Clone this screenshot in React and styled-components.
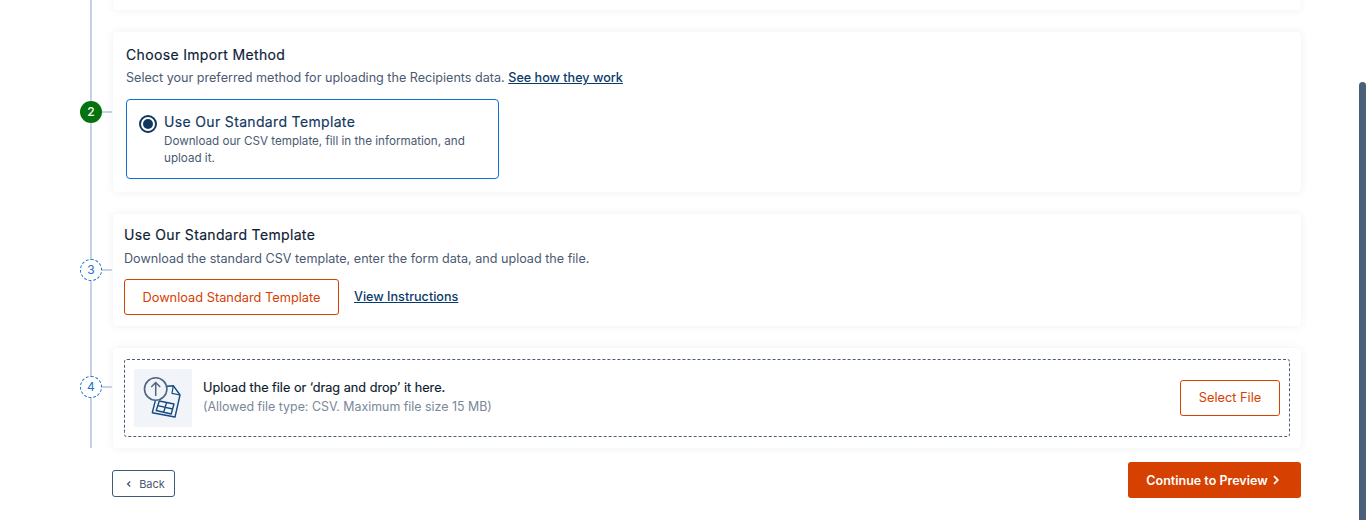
import React from "react";
import styled, { createGlobalStyle } from "styled-components";

const Global = createGlobalStyle`
  html, body { margin: 0; padding: 0; background: #fff; height: 520px; overflow: hidden; }
  body { font-family: Inter, "Liberation Sans", sans-serif; color: #12263f; }
  * { box-sizing: border-box; }
`;

const Page = styled.div`
  position: relative;
  width: 1366px;
  height: 520px;
  overflow: hidden;
  padding: 0 65px 0 80px;
`;

const Thumb = styled.div`
  position: absolute;
  left: 1359px;
  top: 82px;
  width: 7px;
  height: 460px;
  background: #4a5f7a;
  border-radius: 4px 4px 0 0;
`;

const Steps = styled.div`
  position: relative;
  display: flex;
  flex-direction: column;
  gap: 22px;
  &::before {
    content: "";
    position: absolute;
    left: 10px;
    top: 0;
    bottom: 0;
    width: 2px;
    background: #c5d2e6;
  }
`;

const Row = styled.div`
  display: flex;
  align-items: stretch;
`;

const Gutter = styled.div`
  position: relative;
  flex: 0 0 33px;
  display: flex;
  align-items: center;
  padding-bottom: ${(p) => p.$lift || 0}px;
`;

const Marker = styled.div`
  width: 22px;
  height: 22px;
  border-radius: 50%;
  display: flex;
  align-items: center;
  justify-content: center;
  font-size: 12px;
  line-height: 1;
  background: ${(p) => (p.$done ? "#04720f" : "#fff")};
  color: ${(p) => (p.$done ? "#fff" : "#1a6fd0")};
  border: ${(p) => (p.$done ? "none" : "1px dashed #1a76d2")};
  font-weight: ${(p) => (p.$done ? 500 : 400)};
  z-index: 1;
`;

const Connector = styled.div`
  width: 10px;
  height: 2px;
  background: #c5d2e6;
`;

const Card = styled.div`
  flex: 1;
  min-width: 0;
  background: #fff;
  border-radius: 4px;
  box-shadow: 0 0 8px rgba(40, 70, 130, 0.08);
  padding: ${(p) => p.$pad || "0"};
  height: ${(p) => p.$h}px;
`;

const Title = styled.div`
  font-size: 14px;
  font-weight: 400;
  line-height: 20px;
  letter-spacing: 0.34px;
  color: #0c2036;
  -webkit-text-stroke: 0.15px #0c2036;
`;

const Sub = styled.div`
  font-size: 12.6px;
  line-height: 18px;
  color: #4a5a72;
  margin-top: ${(p) => p.$mt || 4}px;
`;

const TextLink = styled.a`
  color: #0b3a6a;
  font-weight: 500;
  text-decoration: underline;
  font-size: 12.6px;
  margin-bottom: ${(p) => (p.$up ? 2 : 0)}px;
`;

const Option = styled.div`
  width: 373px;
  height: 80px;
  margin-top: 12px;
  border: 1px solid #0a73d2;
  border-radius: 4px;
  padding: 12px 12px 0 12px;
  display: flex;
  gap: 7px;
`;

const Radio = styled.div`
  flex: 0 0 18px;
  width: 18px;
  height: 18px;
  margin-top: 3px;
  border-radius: 50%;
  border: 2px solid #12375f;
  display: flex;
  align-items: center;
  justify-content: center;
  &::after {
    content: "";
    width: 10px;
    height: 10px;
    border-radius: 50%;
    background: #12375f;
  }
`;

const OptionTitle = styled.div`
  font-size: 14px;
  line-height: 20px;
  font-weight: 400;
  letter-spacing: 0.34px;
  color: #12375f;
  -webkit-text-stroke: 0.15px #12375f;
  margin-bottom: 1px;
`;

const OptionText = styled.div`
  font-size: 11.65px;
  line-height: 17px;
  color: #4a5a72;
`;

const Actions = styled.div`
  display: flex;
  align-items: center;
  gap: 15px;
  margin-top: 11px;
`;

const OutlineButton = styled.button`
  width: ${(p) => p.$w}px;
  height: 36px;
  background: #fff;
  border: 1px solid #d64000;
  border-radius: 3px;
  color: #d64000;
  font: 400 12.8px Inter, sans-serif;
  padding: 0 0 ${(p) => p.$lift || 0}px;
`;

const Drop = styled.div`
  height: 78px;
  border: 1px dashed #4a5f7a;
  border-radius: 3px;
  display: flex;
  align-items: center;
  padding: 0 9px;
`;

const IconBox = styled.div`
  width: 58px;
  height: 58px;
  background: #f1f5fa;
  flex: none;
`;

const DropText = styled.div`
  flex: 1;
  margin-left: 11px;
  padding-bottom: 2px;
`;

const DropTitle = styled.div`
  font-size: 12.7px;
  font-weight: 400;
  line-height: 18px;
  color: #0c1a2c;
  -webkit-text-stroke: 0.15px #0c1a2c;
`;

const DropNote = styled.div`
  font-size: 12.4px;
  line-height: 18px;
  color: #7a8798;
  margin-top: 1px;
`;

const Footer = styled.div`
  display: flex;
  justify-content: space-between;
  align-items: center;
  margin: 14px 0 0 32px;
`;

const BackButton = styled.button`
  width: 63px;
  height: 27px;
  margin-top: 6px;
  background: #fff;
  border: 1px solid #3d5a78;
  border-radius: 3px;
  color: #4a5a72;
  font: 400 11px Inter, sans-serif;
  display: flex;
  align-items: center;
  justify-content: center;
  gap: 5px;
  padding: 1px 0 0 2px;
`;

const ContinueButton = styled.button`
  width: 173px;
  height: 36px;
  background: #d64000;
  border: none;
  border-radius: 3px;
  color: #fff;
  font: 600 12.5px Inter, sans-serif;
  display: flex;
  align-items: center;
  justify-content: center;
  gap: 3px;
  padding: 0 2px 0 0;
`;

const Chevron = ({ left, size = 10 }) => (
  <svg width={size} height={size} viewBox="0 0 10 10" fill="none">
    <path
      d={left ? "M6.2 2.5 3.6 5l2.6 2.5" : "M3 1.2 6.8 5 3 8.8"}
      stroke="currentColor"
      strokeWidth={left ? 1.3 : 1.7}
    />
  </svg>
);

const UploadIcon = () => (
  <svg width="58" height="58" viewBox="0 0 58 58" fill="none" style={{ display: "block" }}>
    <path
      d="M30 17.5 39.3 16.7 46 26 41 48 18.3 43.7 22 29"
      stroke="#164a80"
      strokeWidth="1.4"
      strokeLinejoin="round"
    />
    <path d="M39.3 16.7 38 24.3 46 26" stroke="#164a80" strokeWidth="1.2" strokeLinejoin="round" />
    <path
      d="M25.3 32 40 35 37.2 45 22.2 41.5Z M32.6 33.5 29.7 43.2 M23.8 36.6 38.6 40"
      stroke="#164a80"
      strokeWidth="1.4"
      strokeLinejoin="round"
    />
    <circle cx="21.7" cy="20" r="11.2" fill="#f1f5fa" stroke="#4f6580" strokeWidth="1.6" />
    <path d="M21.7 27V13.5M17.2 18 21.7 13.5 26.2 18" stroke="#4f6580" strokeWidth="1.5" />
  </svg>
);

function Step({ n, done, lift, children }) {
  return (
    <Row>
      <Gutter $lift={lift}>
        {n ? (
          <>
            <Marker $done={done}>{n}</Marker>
            <Connector />
          </>
        ) : null}
      </Gutter>
      {children}
    </Row>
  );
}

export default function App() {
  return (
    <Page>
      <Global />
      <Steps>
        <Step>
          <Card $h={10} />
        </Step>
        <Step n="2" done>
          <Card $h={160} $pad="13px 12px 0 13px">
            <Title>Choose Import Method</Title>
            <Sub>
              Select your preferred method for uploading the Recipients data.{" "}
              <TextLink>See how they work</TextLink>
            </Sub>
            <Option>
              <Radio />
              <div>
                <OptionTitle>Use Our Standard Template</OptionTitle>
                <OptionText>
                  Download our CSV template, fill in the information, and
                  <br />
                  upload it.
                </OptionText>
              </div>
            </Option>
          </Card>
        </Step>
        <Step n="3">
          <Card $h={112} $pad="11px 11px 0 11px">
            <Title>Use Our Standard Template</Title>
            <Sub $mt={5}>Download the standard CSV template, enter the form data, and upload the file.</Sub>
            <Actions>
              <OutlineButton $w={215}>Download Standard Template</OutlineButton>
              <TextLink $up>View Instructions</TextLink>
            </Actions>
          </Card>
        </Step>
        <Step n="4" lift={22}>
          <Card $h={100} $pad="11px 11px 0 11px">
            <Drop>
              <IconBox>
                <UploadIcon />
              </IconBox>
              <DropText>
                <DropTitle>Upload the file or ‘drag and drop’ it here.</DropTitle>
                <DropNote>(Allowed file type: CSV. Maximum file size 15 MB)</DropNote>
              </DropText>
              <OutlineButton $w={100} $lift={1}>Select File</OutlineButton>
            </Drop>
          </Card>
        </Step>
      </Steps>
      <Footer>
        <BackButton>
          <Chevron left />
          Back
        </BackButton>
        <ContinueButton>
          Continue to Preview
          <Chevron />
        </ContinueButton>
      </Footer>
      <Thumb />
    </Page>
  );
}
